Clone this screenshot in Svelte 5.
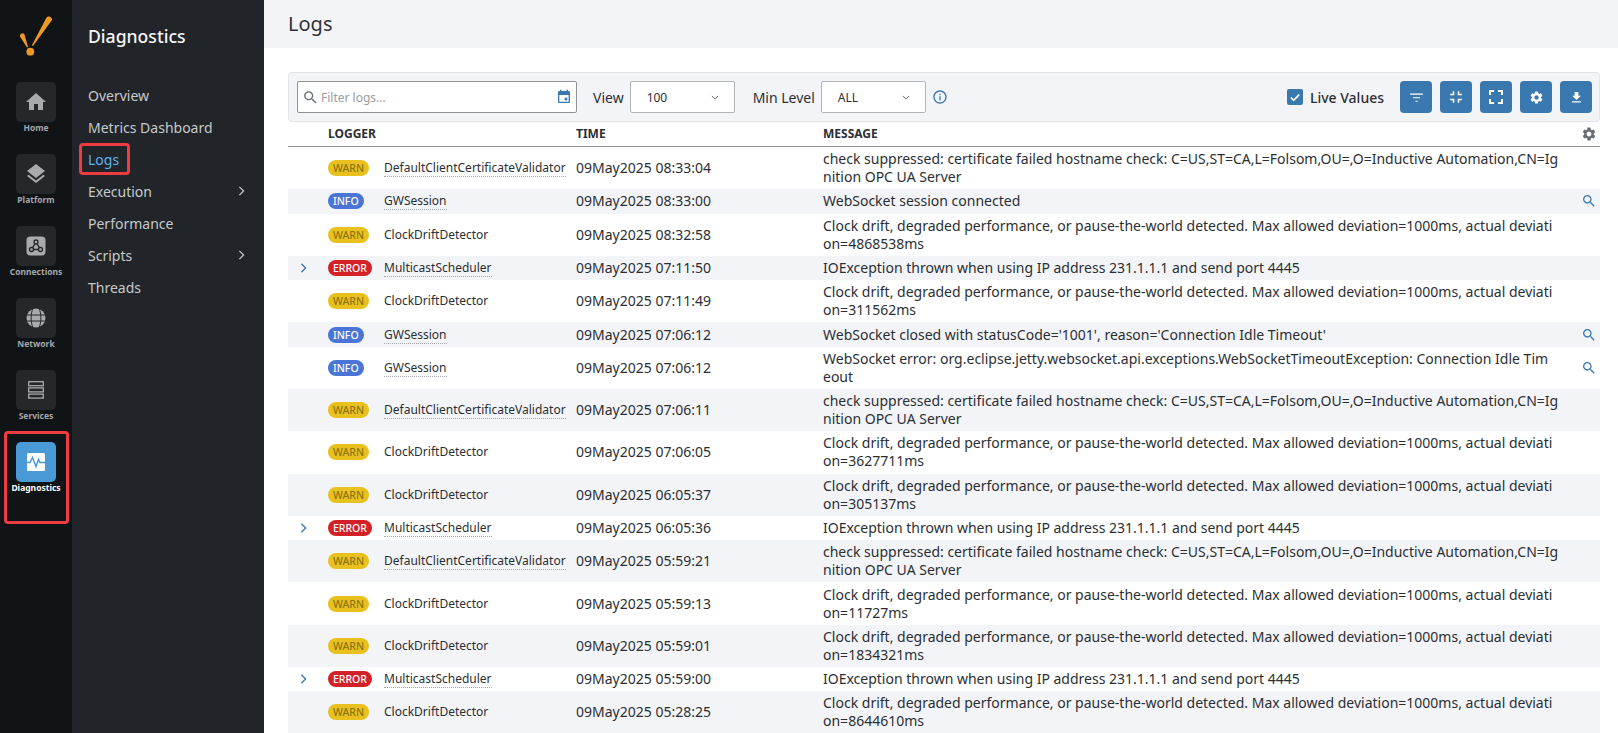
<script>
	const nav = [
		{ label: 'Overview' },
		{ label: 'Metrics Dashboard' },
		{ label: 'Logs', active: true },
		{ label: 'Execution', more: true },
		{ label: 'Performance' },
		{ label: 'Scripts', more: true },
		{ label: 'Threads' }
	];

	const cert = 'check suppressed: certificate failed hostname check: C=US,ST=CA,L=Folsom,OU=,O=Inductive Automation,CN=Ig\nnition OPC UA Server';
	const drift = (n) =>
		`Clock drift, degraded performance, or pause-the-world detected. Max allowed deviation=1000ms, actual deviati\non=${n}ms`;
	const ioErr = 'IOException thrown when using IP address 231.1.1.1 and send port 4445';

	const rows = [
		{ lvl: 'WARN', logger: 'DefaultClientCertificateValidator', time: '09May2025 08:33:04', msg: cert },
		{ lvl: 'INFO', logger: 'GWSession', time: '09May2025 08:33:00', msg: 'WebSocket session connected', find: true },
		{ lvl: 'WARN', logger: 'ClockDriftDetector', time: '09May2025 08:32:58', msg: drift(4868538) },
		{ lvl: 'ERROR', logger: 'MulticastScheduler', time: '09May2025 07:11:50', msg: ioErr },
		{ lvl: 'WARN', logger: 'ClockDriftDetector', time: '09May2025 07:11:49', msg: drift(311562) },
		{ lvl: 'INFO', logger: 'GWSession', time: '09May2025 07:06:12', msg: "WebSocket closed with statusCode='1001', reason='Connection Idle Timeout'", find: true },
		{ lvl: 'INFO', logger: 'GWSession', time: '09May2025 07:06:12', msg: 'WebSocket error: org.eclipse.jetty.websocket.api.exceptions.WebSocketTimeoutException: Connection Idle Tim\neout', find: true },
		{ lvl: 'WARN', logger: 'DefaultClientCertificateValidator', time: '09May2025 07:06:11', msg: cert },
		{ lvl: 'WARN', logger: 'ClockDriftDetector', time: '09May2025 07:06:05', msg: drift(3627711) },
		{ lvl: 'WARN', logger: 'ClockDriftDetector', time: '09May2025 06:05:37', msg: drift(305137) },
		{ lvl: 'ERROR', logger: 'MulticastScheduler', time: '09May2025 06:05:36', msg: ioErr },
		{ lvl: 'WARN', logger: 'DefaultClientCertificateValidator', time: '09May2025 05:59:21', msg: cert },
		{ lvl: 'WARN', logger: 'ClockDriftDetector', time: '09May2025 05:59:13', msg: drift(11727) },
		{ lvl: 'WARN', logger: 'ClockDriftDetector', time: '09May2025 05:59:01', msg: drift(1834321) },
		{ lvl: 'ERROR', logger: 'MulticastScheduler', time: '09May2025 05:59:00', msg: ioErr },
		{ lvl: 'WARN', logger: 'ClockDriftDetector', time: '09May2025 05:28:25', msg: drift(8644610) }
	];

	const gear = 'M19.14 12.94c.04-.3.06-.61.06-.94 0-.32-.02-.64-.07-.94l2.03-1.58c.18-.14.23-.41.12-.61l-1.92-3.32c-.12-.22-.37-.29-.59-.22l-2.39.96c-.5-.38-1.03-.7-1.62-.94l-.36-2.54c-.04-.24-.24-.41-.48-.41h-3.84c-.24 0-.43.17-.47.41l-.36 2.54c-.59.24-1.13.57-1.62.94l-2.39-.96c-.22-.08-.47 0-.59.22L2.74 8.87c-.12.21-.08.47.12.61l2.03 1.58c-.05.3-.09.63-.09.94s.02.64.07.94l-2.03 1.58c-.18.14-.23.41-.12.61l1.92 3.32c.12.22.37.29.59.22l2.39-.96c.5.38 1.03.7 1.62.94l.36 2.54c.05.24.24.41.48.41h3.84c.24 0 .44-.17.47-.41l.36-2.54c.59-.24 1.13-.56 1.62-.94l2.39.96c.22.08.47 0 .59-.22l1.92-3.32c.12-.22.07-.47-.12-.61l-2.01-1.58zM12 15.6c-1.98 0-3.6-1.62-3.6-3.6s1.62-3.6 3.6-3.6 3.6 1.62 3.6 3.6-1.62 3.6-3.6 3.6z';
	const search = 'M15.5 14h-.79l-.28-.27C15.41 12.59 16 11.11 16 9.5 16 5.91 13.09 3 9.5 3S3 5.91 3 9.5 5.91 16 9.5 16c1.61 0 3.09-.59 4.23-1.57l.27.28v.79l5 4.99L20.49 19l-4.99-5zm-6 0C7.01 14 5 11.99 5 9.5S7.01 5 9.5 5 14 7.01 14 9.5 11.99 14 9.5 14z';
	const actions = [
		{ size: 17, d: 'M3 6.500h18v1.500H3zM7 11.500h10v1.500H7zM10.500 16.500h3v1.500h-3z' },
		{ size: 20, d: 'M5 16h3v3h2v-5H5v2zm3-8H5v2h5V5H8v3zm6 11h2v-3h3v-2h-5v5zm2-11V5h-2v5h5V8h-3z' },
		{ size: 24, d: 'M7 14H5v5h5v-2H7v-3zm-2-4h2V7h3V5H5v5zm12 7h-3v2h5v-5h-2v3zM14 5v2h3v3h2V5h-5z' },
		{ size: 15, d: gear },
		{ size: 15, d: 'M19 9h-4V3H9v6H5l7 7 7-7zM5 18v2h14v-2H5z' }
	];
</script>

<div class="app">
	<aside class="rail">
		<svg class="logo" viewBox="18 16 36 44" aria-hidden="true">
			<path d="M20 36.500a2.500 2.500 0 0 1 4.500-2L28 47l-1 .5z" fill="#ee9a22" />
			<path d="M46.500 17.500a3.200 3.200 0 0 1 5.500 2.500L33 46l-1.200-.5z" fill="#ee9a22" />
			<circle cx="30.300" cy="51.700" r="3.900" fill="#ee9a22" />
		</svg>

		<div class="rail-item">
			<span class="tile">
				<svg viewBox="0 0 24 24" width="24" height="24"><path d="M10 20v-6h4v6h5v-8h3L12 3 2 12h3v8z" /></svg>
			</span>
			<span class="rail-label">Home</span>
		</div>
		<div class="rail-item">
			<span class="tile">
				<svg viewBox="0 0 24 24" width="24" height="24"><path d="M11.990 18.540l-7.370-5.730L3 14.070l9 7 9-7-1.630-1.270-7.380 5.740zM12 16l7.360-5.730L21 9l-9-7-9 7 1.630 1.270L12 16z" /></svg>
			</span>
			<span class="rail-label">Platform</span>
		</div>
		<div class="rail-item">
			<span class="tile">
				<svg viewBox="0 0 20 20" width="20" height="20">
					<rect x="0.500" y="0.500" width="19" height="19" rx="4" fill="#a8abae" />
					<g fill="none" stroke="#25282b" stroke-width="1.300">
						<circle cx="10" cy="6" r="2" />
						<circle cx="5.500" cy="13.500" r="2" />
						<circle cx="14.500" cy="13.500" r="2" />
						<path d="M9 7.700L6.500 11.800M11 7.700l2.500 4.100M7.500 13.500h5" />
					</g>
				</svg>
			</span>
			<span class="rail-label">Connections</span>
		</div>
		<div class="rail-item">
			<span class="tile">
				<svg viewBox="0 0 20 20" width="20" height="20">
					<circle cx="10" cy="10" r="9.500" fill="#a8abae" />
					<g fill="none" stroke="#25282b" stroke-width="1">
						<path d="M0 7h20M0 13h20M7 0c-2.500 6-2.500 14 0 20M13 0c2.500 6 2.500 14 0 20" />
					</g>
				</svg>
			</span>
			<span class="rail-label">Network</span>
		</div>
		<div class="rail-item">
			<span class="tile">
				<svg viewBox="0 0 16 18" width="16" height="18" fill="none" stroke="#a8abae" stroke-width="1.300">
					<rect x="0.700" y="0.700" width="14.600" height="4" />
					<rect x="0.700" y="6.900" width="14.600" height="4" />
					<rect x="0.700" y="13.100" width="14.600" height="4" />
				</svg>
			</span>
			<span class="rail-label">Services</span>
		</div>
		<div class="rail-item current">
			<span class="tile">
				<svg viewBox="0 0 18 18" width="18" height="18">
					<rect width="18" height="18" rx="1.500" fill="#fff" />
					<path d="M0 9.500h3l2.500-5 3.500 9 2.500-7 1.500 3h5" fill="none" stroke="#4a9ad8" stroke-width="1.500" />
				</svg>
			</span>
			<span class="rail-label">Diagnostics</span>
		</div>
	</aside>

	<nav class="subnav">
		<h2>Diagnostics</h2>
		<ul>
			{#each nav as item}
				<li class:active={item.active}>
					<span class="nav-label">{item.label}</span>
					{#if item.more}
						<svg viewBox="0 0 8 12" width="7" height="10" fill="none" stroke="#c6c9cb" stroke-width="1.500"><path d="M1.500 1l5 5-5 5" /></svg>
					{/if}
				</li>
			{/each}
		</ul>
	</nav>

	<main class="main">
		<header class="page-head">Logs</header>
		<section class="content">
			<div class="toolbar">
				<div class="filter">
					<svg viewBox="0 0 24 24" width="17" height="17" fill="#6d7278"><path d={search} /></svg>
					<span class="placeholder">Filter logs...</span>
					<svg viewBox="0 0 24 24" width="16" height="16" fill="#3a78b0">
						<path d="M19 3h-1V1h-2v2H8V1H6v2H5C3.900 3 3 3.900 3 5v14c0 1.100.9 2 2 2h14c1.100 0 2-.9 2-2V5c0-1.100-.9-2-2-2zm0 16H5V9h14v10z" />
						<rect x="13" y="13" width="4" height="4" />
					</svg>
				</div>
				<span class="field-label view">View</span>
				<div class="select">
					<span>100</span>
					<svg viewBox="0 0 10 6" width="8" height="5" fill="none" stroke="#666" stroke-width="1.200"><path d="M1 1l4 4 4-4" /></svg>
				</div>
				<span class="field-label level">Min Level</span>
				<div class="select">
					<span>ALL</span>
					<svg viewBox="0 0 10 6" width="8" height="5" fill="none" stroke="#666" stroke-width="1.200"><path d="M1 1l4 4 4-4" /></svg>
				</div>
				<svg class="hint" viewBox="0 0 24 24" width="16" height="16" fill="#3a78b0"><path d="M11 7h2v2h-2zm0 4h2v6h-2zm1-9C6.480 2 2 6.480 2 12s4.480 10 10 10 10-4.480 10-10S17.520 2 12 2zm0 18c-4.410 0-8-3.590-8-8s3.590-8 8-8 8 3.590 8 8-3.590 8-8 8z" /></svg>

				<div class="live">
					<span class="check">
						<svg viewBox="0 0 12 10" width="10" height="9" fill="none" stroke="#fff" stroke-width="2"><path d="M1 5l3.500 3.500L11 1.500" /></svg>
					</span>
					<span>Live Values</span>
				</div>
				<div class="actions">
					{#each actions as a}
						<button type="button">
							<svg viewBox="0 0 24 24" width={a.size} height={a.size} fill="#fff"><path d={a.d} /></svg>
						</button>
					{/each}
				</div>
			</div>

			<div class="row head">
				<span></span>
				<span>LOGGER</span>
				<span>TIME</span>
				<span>MESSAGE</span>
				<span class="end"><svg viewBox="0 0 24 24" width="16" height="16" fill="#6a6e72"><path d={gear} /></svg></span>
			</div>

			{#each rows as r}
				<div class="row">
					<span class="toggle">
						{#if r.lvl === 'ERROR'}
							<svg viewBox="0 0 8 12" width="7" height="10" fill="none" stroke="#3a78b0" stroke-width="1.600"><path d="M1.500 1l5 5-5 5" /></svg>
						{/if}
					</span>
					<span class="who">
						<span class="badge-cell"><span class="badge {r.lvl.toLowerCase()}">{r.lvl}</span></span>
						<span class="logger" class:plain={r.logger === 'ClockDriftDetector'}>{r.logger}</span>
					</span>
					<span class="time">{r.time}</span>
					<span class="msg">{r.msg}</span>
					<span class="end">
						{#if r.find}
							<svg viewBox="0 0 24 24" width="16" height="16" fill="#3a78b0"><path d={search} /></svg>
						{/if}
					</span>
				</div>
			{/each}
		</section>
	</main>
</div>

<style>
	:global(body) {
		margin: 0;
		font-family: 'Noto Sans', sans-serif;
		color: #2b2f33;
	}
	.app {
		display: flex;
		height: 733px;
		overflow: hidden;
		background: #fff;
	}
	.rail {
		width: 72px;
		flex: none;
		background: #101417;
		display: flex;
		flex-direction: column;
		align-items: center;
		padding-top: 16px;
		box-sizing: border-box;
	}
	.logo {
		width: 36px;
		height: 44px;
		margin-bottom: 22px;
	}
	.rail-item {
		position: relative;
		width: 64px;
		height: 72px;
		display: flex;
		flex-direction: column;
		align-items: center;
	}
	.tile {
		width: 40px;
		height: 40px;
		border-radius: 5px;
		background: #25282b;
		display: flex;
		align-items: center;
		justify-content: center;
		fill: #a8abae;
	}
	.rail-label {
		font-size: 8.500px;
		font-weight: 700;
		line-height: 12px;
		color: #a3a7aa;
	}
	.current .tile {
		background: #4a9ad8;
	}
	.current .rail-label {
		color: #fff;
	}
	.current::after {
		content: '';
		position: absolute;
		left: 0;
		right: -1px;
		top: -11px;
		bottom: -10px;
		border: 3px solid #ef3b42;
		border-radius: 4px;
	}
	.subnav {
		width: 192px;
		flex: none;
		background: #212529;
		padding: 24px 0 0 16px;
		box-sizing: border-box;
	}
	.subnav h2 {
		margin: 0 0 31px;
		font-size: 17.600px;
		font-weight: 500;
		line-height: 24px;
		color: #f4f5f6;
	}
	.subnav ul {
		list-style: none;
		margin: 0;
		padding: 0;
	}
	.subnav li {
		height: 32px;
		display: flex;
		align-items: center;
		justify-content: space-between;
		padding-right: 19px;
		font-size: 14px;
		color: #c6c9cb;
	}
	.nav-label {
		position: relative;
	}
	.active .nav-label {
		color: #5db2ee;
	}
	.active .nav-label::after {
		content: '';
		position: absolute;
		left: -9px;
		right: -11px;
		top: -7px;
		bottom: -6px;
		border: 3px solid #ef3b42;
		border-radius: 4px;
	}
	.main {
		flex: 1;
		min-width: 0;
	}
	.page-head {
		height: 48px;
		background: #f3f4f8;
		padding-left: 24px;
		font-size: 20px;
		line-height: 48px;
		color: #2f3337;
	}
	.content {
		margin: 24px 18px 0 24px;
	}
	.toolbar {
		height: 50px;
		box-sizing: border-box;
		background: #f3f4f8;
		border: 1px solid #e0e2e7;
		border-radius: 4px;
		display: flex;
		align-items: center;
		padding: 0 7px 0 8px;
		font-size: 14px;
	}
	.filter {
		width: 280px;
		height: 32px;
		box-sizing: border-box;
		background: #fff;
		border: 1px solid #8e9297;
		border-radius: 2px;
		display: flex;
		align-items: center;
		padding: 0 4px;
		gap: 2px;
	}
	.placeholder {
		flex: 1;
		font-size: 12px;
		color: #9a9ea3;
	}
	.view {
		margin: 0 6px 0 16px;
	}
	.level {
		margin: 0 6px 0 18px;
	}
	.select {
		width: 105px;
		height: 32px;
		box-sizing: border-box;
		background: #fff;
		border: 1px solid #b0b3b8;
		border-radius: 2px;
		display: flex;
		align-items: center;
		justify-content: space-between;
		padding: 0 15px 0 16px;
		font-size: 12px;
	}
	.hint {
		margin-left: 6px;
	}
	.live {
		margin-left: auto;
		display: flex;
		align-items: center;
		gap: 7px;
		font-weight: 500;
	}
	.check {
		width: 16px;
		height: 16px;
		border-radius: 2px;
		background: #3a78b0;
		display: flex;
		align-items: center;
		justify-content: center;
	}
	.actions {
		display: flex;
		gap: 8px;
		margin-left: 16px;
	}
	.actions button {
		width: 32px;
		height: 32px;
		padding: 0;
		border: 0;
		border-radius: 4px;
		background: #3a78b0;
		display: flex;
		align-items: center;
		justify-content: center;
	}
	.row {
		display: grid;
		grid-template-columns: 40px 248px 247px 1fr 40px;
		align-items: center;
		font-size: 14px;
		line-height: 18px;
		padding: 3.150px 0;
	}
	.row:nth-child(even) {
		background: #f3f4f8;
	}
	.row.head {
		height: 25px;
		box-sizing: border-box;
		padding: 0;
		border-bottom: 1px solid #8e9297;
		font-size: 12px;
		font-weight: 700;
		background: #fff;
	}
	.toggle {
		display: flex;
		justify-content: center;
		padding-right: 10px;
	}
	.who {
		display: flex;
		align-items: center;
		height: 18px;
	}
	.badge-cell {
		width: 56px;
		flex: none;
		display: flex;
	}
	.badge {
		font-size: 10.500px;
		font-weight: 500;
		line-height: 16px;
		border-radius: 8px;
		padding: 0 5px;
	}
	.warn {
		background: #e8c11f;
		color: #8f7412;
	}
	.info {
		background: #4a74d6;
		color: #fff;
	}
	.error {
		background: #d42027;
		color: #fff;
	}
	.logger {
		font-size: 12px;
		line-height: 17px;
		border-bottom: 1px dotted #a4a7ab;
		white-space: nowrap;
	}
	.logger.plain {
		border-bottom-color: transparent;
	}
	.msg {
		white-space: pre-line;
	}
	.end {
		display: flex;
		justify-content: flex-end;
		padding-right: 3px;
	}
</style>
